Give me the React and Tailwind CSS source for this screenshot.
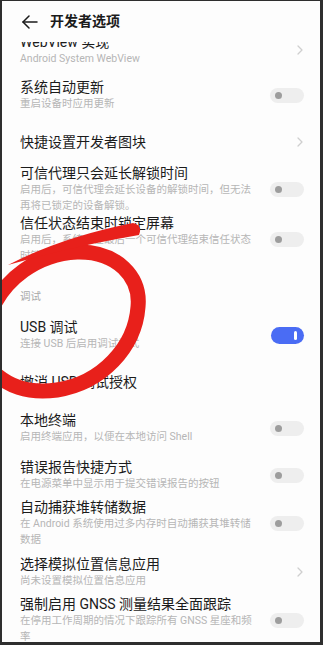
import React from 'react';

const rows = [
  { title: 'WebView 实现', sub: ['Android System WebView'], right: 'chev', gap: '-mt-[9px]' },
  { title: '系统自动更新', sub: ['重启设备时应用更新'], right: 'off', gap: 'mt-[11px]' },
  { title: '快捷设置开发者图块', sub: [], right: 'chev', gap: 'mt-[21px]' },
  {
    title: '可信代理只会延长解锁时间',
    sub: ['启用后，可信代理会延长设备的解锁时间，但无法', '再将已锁定的设备解锁。'],
    right: 'off',
    gap: 'mt-[13px]',
  },
  {
    title: '信任状态结束时锁定屏幕',
    sub: ['启用后，系统会在最后一个可信代理结束信任状态', '时锁定设备'],
    right: 'off',
    gap: 'mt-0',
  },
  { section: '调试', gap: 'mt-[25px]' },
  { title: 'USB 调试', sub: ['连接 USB 后启用调试模式'], right: 'on', gap: 'mt-[13px]' },
  { title: '撤消 USB 调试授权', sub: [], right: null, gap: 'mt-[21px]' },
  { title: '本地终端', sub: ['启用终端应用，以便在本地访问 Shell'], right: 'off', gap: 'mt-[20px]' },
  { title: '错误报告快捷方式', sub: ['在电源菜单中显示用于提交错误报告的按钮'], right: 'off', gap: 'mt-[13px]' },
  {
    title: '自动捕获堆转储数据',
    sub: ['在 Android 系统使用过多内存时自动捕获其堆转储', '数据'],
    right: 'off',
    gap: 'mt-[6px]',
  },
  { title: '选择模拟位置信息应用', sub: ['尚未设置模拟位置信息应用'], right: 'chev', gap: 'mt-[7px]' },
  {
    title: '强制启用 GNSS 测量结果全面跟踪',
    sub: ['在停用工作周期的情况下跟踪所有 GNSS 星座和频', '率'],
    right: 'off',
    gap: 'mt-[6px]',
  },
];

const Chevron = () => (
  <svg width="6" height="10" viewBox="0 0 6 10" className="mr-[1px]">
    <polyline points="1,1 5,5 1,9" fill="none" stroke="#cfcfcf" strokeWidth="1.3" strokeLinecap="round" strokeLinejoin="round" />
  </svg>
);

const ToggleOff = () => (
  <div className="w-[34px] h-[15px] rounded-full bg-[#eeeeee] flex items-center pl-[5px]">
    <div className="w-[7px] h-[7px] rounded-full bg-[#9d9d9d]" />
  </div>
);

const ToggleOn = () => (
  <div className="w-[33px] h-[17px] rounded-full bg-[#4a6cf4] flex items-center justify-end pr-[7px]">
    <div className="w-[3px] h-[9px] rounded-full bg-white" />
  </div>
);

const Row = ({ item }) => {
  if (item.section) {
    return (
      <div className={`${item.gap} text-[10.5px] leading-[16px] text-[#a8a8a8]`}>{item.section}</div>
    );
  }
  return (
    <div className={`${item.gap} flex items-center justify-between`}>
      <div className="flex flex-col">
        <div className="text-[14px] leading-[18px] text-[#1b1b1b] whitespace-nowrap">{item.title}</div>
        {item.sub.map((line, i) => (
          <div key={i} className="text-[10.5px] leading-[16px] text-[#b6b6b6] whitespace-nowrap">
            {line}
          </div>
        ))}
      </div>
      {item.right === 'chev' && <Chevron />}
      {item.right === 'off' && <ToggleOff />}
      {item.right === 'on' && <ToggleOn />}
    </div>
  );
};

const App = () => {
  return (
    <div className="relative w-[323px] h-[645px] overflow-hidden bg-[#fdfdfd] border-l-2 border-t border-r-[3px] border-b-[3px] border-[#2e2e2e] font-['Roboto','Noto_Sans_CJK_SC',sans-serif]">
      <div className="relative z-10 h-[41px] bg-[#fdfdfd] flex items-center pl-[20px]">
        <svg width="16" height="14" viewBox="0 0 16 14">
          <polyline points="7,1 1,7 7,13" fill="none" stroke="#1b1b1b" strokeWidth="1.5" strokeLinecap="round" strokeLinejoin="round" />
          <line x1="1" y1="7" x2="15" y2="7" stroke="#1b1b1b" strokeWidth="1.5" strokeLinecap="round" />
        </svg>
        <span className="ml-[12px] text-[14px] font-bold text-[#1b1b1b]">开发者选项</span>
      </div>

      <div className="flex flex-col pl-[18px] pr-[16px]">
        {rows.map((item, i) => (
          <Row key={i} item={item} />
        ))}
      </div>

      {/* red marker swirl */}
      <svg className="absolute inset-0 z-20 pointer-events-none" width="323" height="645" viewBox="0 0 323 645">
        <path
          d="M -12 312 C 2 278, 35 253, 75 251 C 115 250, 139 276, 136 306 C 133 346, 100 382, 55 389 C 25 393, 5 385, -12 368"
          fill="none"
          stroke="#e8201b"
          strokeWidth="15"
          strokeLinecap="round"
        />
        <path d="M 6 264 Q 60 236 131 222 Q 141 224 137 234 Q 72 245 6 264 Z" fill="#e8201b" />
      </svg>
    </div>
  );
};

export default App;
